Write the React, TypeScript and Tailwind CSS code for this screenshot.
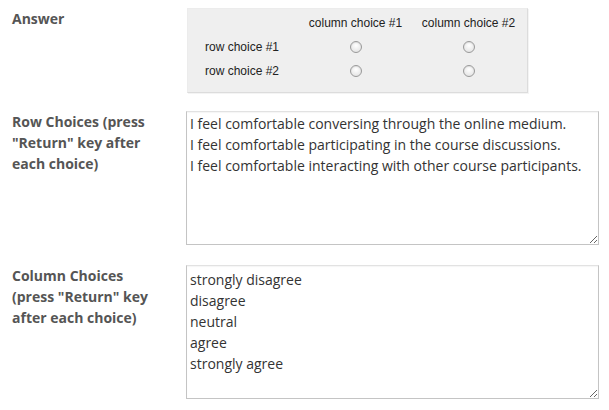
import React from "react";

const Radio = () => (
  <span className="inline-block h-[12px] w-[12px] rounded-full border border-[#9a9a9a] bg-[radial-gradient(circle_at_50%_35%,#ffffff,#dedede)] shadow-[inset_0_1px_1px_rgba(0,0,0,0.08)]" />
);

export default function App() {
  const rows =
    "I feel comfortable conversing through the online medium.\nI feel comfortable participating in the course discussions.\nI feel comfortable interacting with other course participants.";
  const cols = "strongly disagree\ndisagree\nneutral\nagree\nstrongly agree";
  const label =
    "w-[186px] shrink-0 pl-[12px] pr-[26px] text-[14px] leading-[21px] font-bold text-[#555555]";
  const ta =
    "block h-[134px] w-[413px] border border-[#c4c4c4] border-t-[#e2e2e2] px-[3px] pb-[2px] text-[14px] leading-[21px] text-[#333333] shadow-[inset_0_1px_1px_rgba(0,0,0,0.04)] outline-none";
  return (
    <div
      className="h-[410px] w-[609px] bg-white pt-[8px]"
      style={{ fontFamily: '"Open Sans", sans-serif' }}
    >
      <div className="flex">
        <div className={label}>Answer</div>
        <div
          className="ml-[1px] h-[85px] w-[341px] border border-[#ececec] border-b-[#dcdcdc] border-r-[#dcdcdc] bg-[#efefef] pl-[17px] pt-[2px] text-[12px] text-[#222222] shadow-[1px_1px_0_#f4f4f4]"
          style={{ fontFamily: '"Liberation Sans", Arial, sans-serif' }}
        >
          <div className="flex h-[24px] items-center">
            <div className="w-[94px]" />
            <div className="w-[113px] text-center">column choice #1</div>
            <div className="w-[113px] text-center">column choice #2</div>
          </div>
          {["row choice #1", "row choice #2"].map((r) => (
            <div key={r} className="flex h-[24px] items-center">
              <div className="w-[94px]">{r}</div>
              <div className="flex w-[113px] justify-center">
                <Radio />
              </div>
              <div className="flex w-[113px] justify-center">
                <Radio />
              </div>
            </div>
          ))}
        </div>
      </div>
      <div className="mt-[18px] flex">
        <div className={label}>Row Choices (press "Return" key after each choice)</div>
        <textarea
          readOnly
          className={`${ta} pt-[1px]`}
          defaultValue={rows}
          style={{ fontFamily: '"Open Sans", sans-serif', resize: "both" }}
        />
      </div>
      <div className="mt-[20px] flex">
        <div className={label}>Column Choices (press "Return" key after each choice)</div>
        <textarea
          readOnly
          className={`${ta} pt-[3px]`}
          defaultValue={cols}
          style={{ fontFamily: '"Open Sans", sans-serif', resize: "both" }}
        />
      </div>
    </div>
  );
}
